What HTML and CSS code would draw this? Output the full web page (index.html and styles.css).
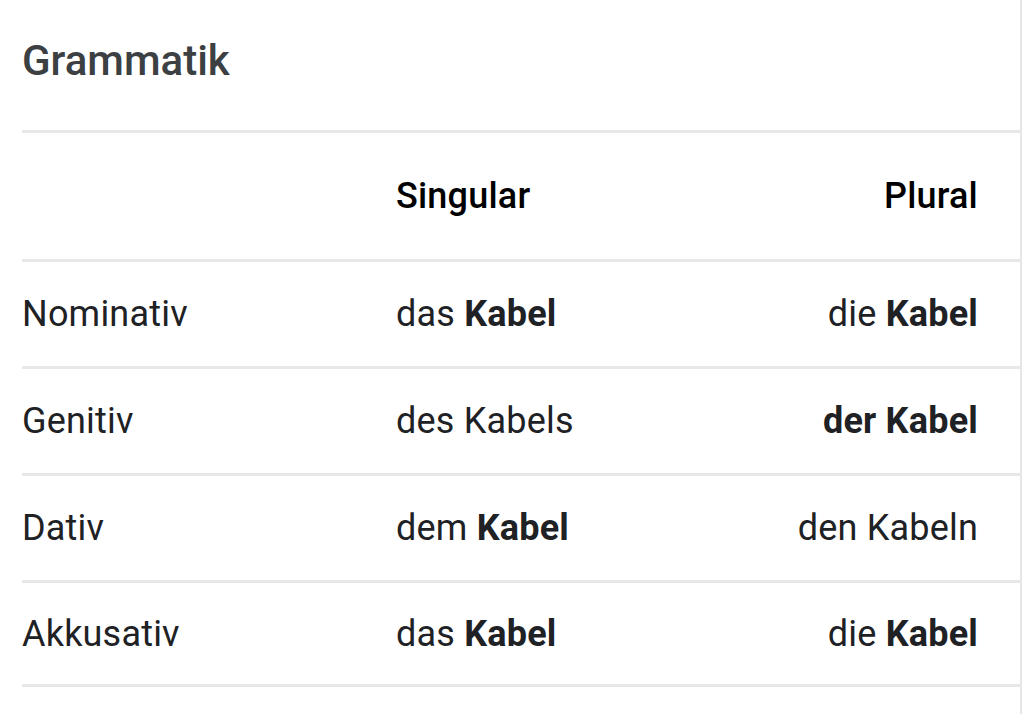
FILE: index.html
```html
<!DOCTYPE html>
<html lang="de">
<head>
<meta charset="utf-8">
<title>Grammatik</title>
<link rel="stylesheet" href="styles.css">
</head>
<body>
<div class="card">
  <h2 class="title">Grammatik</h2>
  <div class="table">
    <div class="row head">
      <div class="c1"></div>
      <div class="c2">Singular</div>
      <div class="c3">Plural</div>
    </div>
    <div class="row">
      <div class="c1">Nominativ</div>
      <div class="c2">das <b>Kabel</b></div>
      <div class="c3">die <b>Kabel</b></div>
    </div>
    <div class="row">
      <div class="c1">Genitiv</div>
      <div class="c2">des Kabels</div>
      <div class="c3"><b>der Kabel</b></div>
    </div>
    <div class="row">
      <div class="c1">Dativ</div>
      <div class="c2">dem <b>Kabel</b></div>
      <div class="c3">den Kabeln</div>
    </div>
    <div class="row last">
      <div class="c1">Akkusativ</div>
      <div class="c2">das <b>Kabel</b></div>
      <div class="c3">die <b>Kabel</b></div>
    </div>
  </div>
</div>
</body>
</html>
```
FILE: styles.css
```css
html, body {
  margin: 0;
  padding: 0;
  background: #ffffff;
}
body {
  font-family: Roboto, "Liberation Sans", Arial, sans-serif;
  color: #202124;
}
.card {
  box-sizing: border-box;
  width: 1022px;
  min-height: 714px;
  padding-left: 22px;
  border-right: 2px solid #e6e6e6;
}
.title {
  margin: 0;
  height: 130px;
  box-sizing: border-box;
  padding-top: 37px;
  font-size: 42px;
  line-height: 48px;
  font-weight: 500;
  color: #3c4043;
}
.table {
  display: flex;
  flex-direction: column;
}
.row {
  display: grid;
  grid-template-columns: 374px 1fr auto;
  align-items: center;
  height: 107px;
  box-sizing: border-box;
  border-top: 3px solid #e8e8e8;
  padding-right: 42px;
  font-size: 36px;
  letter-spacing: 0.2px;
}
.row.head {
  height: 129px;
  font-weight: 500;
  color: #000000;
}
.row.last {
  border-bottom: 3px solid #e8e8e8;
}
.c3 {
  text-align: right;
}
b {
  font-weight: 700;
}
```
